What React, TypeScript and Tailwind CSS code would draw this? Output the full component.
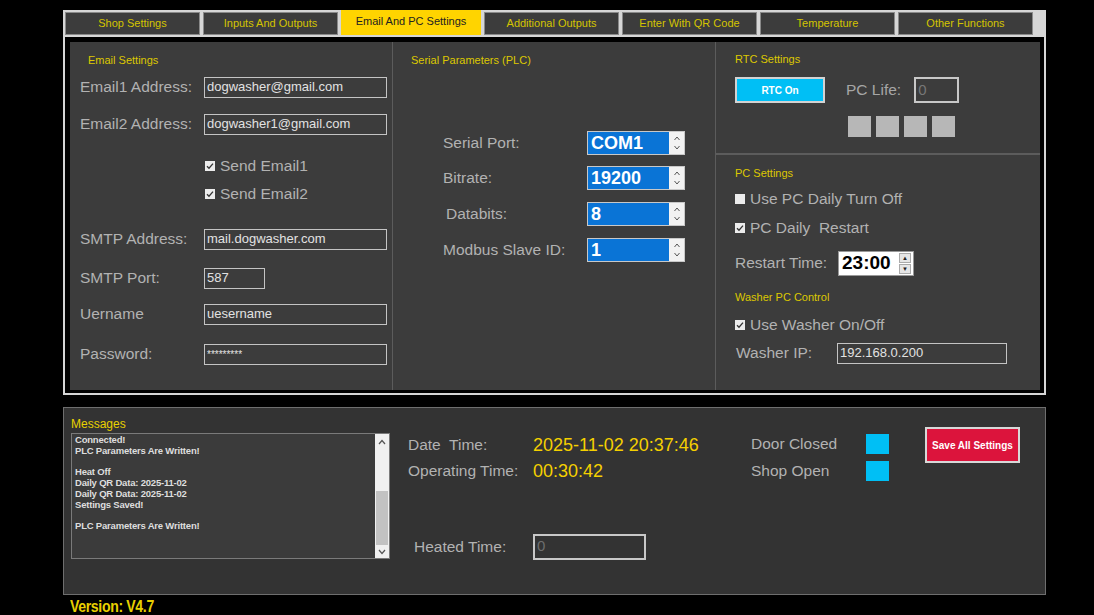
import React from 'react'

const tabs = [
  'Shop Settings',
  'Inputs And Outputs',
  'Email And PC Settings',
  'Additional Outputs',
  'Enter With QR Code',
  'Temperature',
  'Other Functions',
]

const messages = [
  'Connected!',
  'PLC Parameters Are Written!',
  '',
  'Heat Off',
  'Daily QR Data: 2025-11-02',
  'Daily QR Data: 2025-11-02',
  'Settings Saved!',
  '',
  'PLC Parameters Are Written!',
]

function Heading({ children }: { children: React.ReactNode }) {
  return <div className="h-[14px] text-[11px] leading-[14px] text-[#dcc800]">{children}</div>
}

function Check({ checked }: { checked: boolean }) {
  return (
    <div className="flex h-[10px] w-[10px] shrink-0 items-center justify-center bg-[#ececec]">
      {checked && (
        <svg width="8" height="8" viewBox="0 0 8 8">
          <path d="M1 4.2 L3 6.2 L7 1.6" fill="none" stroke="#333" strokeWidth="1.3" />
        </svg>
      )}
    </div>
  )
}

function Arrows() {
  return (
    <svg width="8" height="18" viewBox="0 0 8 18">
      <path d="M1.5 6 L4 3 L6.5 6" fill="none" stroke="#555" strokeWidth="1" />
      <path d="M1.5 12 L4 15 L6.5 12" fill="none" stroke="#555" strokeWidth="1" />
    </svg>
  )
}

function TextBox({ value, w, h = 21, small }: { value: string; w: number; h?: number; small?: boolean }) {
  return (
    <div
      className={`flex items-center border border-[#c4c4c4] pl-[2px] text-[#e2e2e2] ${small ? 'text-[10px]' : 'text-[13px]'}`}
      style={{ width: w, height: h }}
    >
      {value}
    </div>
  )
}

function Spin({ value }: { value: string }) {
  return (
    <div className="flex h-[24px] w-[98px] border border-[#c8c8c8] bg-[#f2f2f2]">
      <div className="flex w-[81px] items-center bg-[#0a74d6] pl-[3px] text-[18px] font-bold text-white">{value}</div>
      <div className="flex flex-1 items-center justify-center">
        <Arrows />
      </div>
    </div>
  )
}

function Row({ label, w, mt, children, h = 22, pl = 0 }: { label: string; w: number; mt: number; children?: React.ReactNode; h?: number; pl?: number }) {
  return (
    <div className="flex items-center" style={{ marginTop: mt, height: h }}>
      <div className="shrink-0 text-[15.5px] text-[#b2b2b2]" style={{ width: w, paddingLeft: pl }}>
        {label}
      </div>
      {children}
    </div>
  )
}

function CheckRow({ label, checked, mt, indent }: { label: string; checked: boolean; mt: number; indent: number }) {
  return (
    <div className="flex h-[20px] items-center" style={{ marginTop: mt, paddingLeft: indent }}>
      <Check checked={checked} />
      <span className="ml-[5px] whitespace-pre text-[15.5px] text-[#b2b2b2]">{label}</span>
    </div>
  )
}

export default function App() {
  return (
    <div className="h-[615px] w-[1094px] overflow-hidden bg-black font-['Liberation_Sans',Arial,sans-serif]">
      <div className="ml-[63px] w-[983px] pt-[10px]">
        {/* tab strip */}
        <div className="flex h-[25px] items-end gap-[3px] bg-[#d6d6d6] px-[2px]">
          {tabs.map((t) =>
            t === 'Email And PC Settings' ? (
              <div key={t} className="flex h-[25px] w-[140px] items-center justify-center bg-[#ffd400] pb-[2px] text-[11px] text-[#222]">
                {t}
              </div>
            ) : (
              <div key={t} className="flex h-[23px] w-[135px] items-center justify-center border border-[#8a8a8a] bg-[#3c3c3c] text-[11px] text-[#d4c400]">
                {t}
              </div>
            ),
          )}
        </div>

        {/* page */}
        <div className="bg-[#d6d6d6] p-[2px]">
          <div className="bg-black pb-[3px] pl-[5px] pr-[4px] pt-[5px]">
            <div className="flex h-[348px] bg-[#3c3c3c]">
              {/* email settings */}
              <div className="w-[323px] border-r border-[#5c5c5c] pl-[10px] pt-[11px]">
                <div className="pl-[8px]">
                  <Heading>Email Settings</Heading>
                </div>
                <Row label="Email1 Address:" w={124} mt={9}>
                  <TextBox value="dogwasher@gmail.com" w={183} />
                </Row>
                <Row label="Email2 Address:" w={124} mt={15}>
                  <TextBox value="dogwasher1@gmail.com" w={183} />
                </Row>
                <CheckRow label="Send Email1" checked mt={21} indent={125} />
                <CheckRow label="Send Email2" checked mt={8} indent={125} />
                <Row label="SMTP Address:" w={124} mt={24}>
                  <TextBox value="mail.dogwasher.com" w={183} />
                </Row>
                <Row label="SMTP Port:" w={124} mt={17}>
                  <TextBox value="587" w={61} />
                </Row>
                <Row label="Uername" w={124} mt={14}>
                  <TextBox value="uesername" w={183} />
                </Row>
                <Row label="Password:" w={124} mt={18}>
                  <TextBox value="*********" w={183} small />
                </Row>
              </div>

              {/* serial parameters */}
              <div className="w-[323px] border-r border-[#5c5c5c] pt-[11px]">
                <div className="pl-[18px]">
                  <Heading>Serial Parameters (PLC)</Heading>
                </div>
                <div className="pl-[50px]">
                  <Row label="Serial Port:" w={144} mt={64} h={24}>
                    <Spin value="COM1" />
                  </Row>
                  <Row label="Bitrate:" w={144} mt={11} h={24}>
                    <Spin value="19200" />
                  </Row>
                  <Row label="Databits:" w={144} mt={12} h={24} pl={3}>
                    <Spin value="8" />
                  </Row>
                  <Row label="Modbus Slave ID:" w={144} mt={12} h={24}>
                    <Spin value="1" />
                  </Row>
                </div>
              </div>

              {/* rtc + pc */}
              <div className="flex flex-1 flex-col">
                <div className="h-[113px] border-b-2 border-[#5c5c5c] pl-[19px] pt-[10px]">
                  <Heading>RTC Settings</Heading>
                  <div className="mt-[10px] flex h-[28px] items-center">
                    <div className="flex h-[26px] w-[90px] items-center justify-center border-2 border-[#d2d2d2] bg-[#00bff5] text-[10px] font-bold text-white">
                      RTC On
                    </div>
                    <span className="ml-[21px] text-[15.5px] text-[#a6a6a6]">PC Life:</span>
                    <div className="ml-[13px] flex h-[26px] w-[45px] items-center border-2 border-[#c8c8c8] pl-[2px] text-[15px] text-[#777]">
                      0
                    </div>
                  </div>
                  <div className="ml-[113px] mt-[12px] flex gap-[5px]">
                    {[0, 1, 2, 3].map((i) => (
                      <div key={i} className="h-[21px] w-[23px] bg-[#b7b7b7]" />
                    ))}
                  </div>
                </div>
                <div className="flex-1 pl-[19px] pt-[11px]">
                  <Heading>PC Settings</Heading>
                  <CheckRow label="Use PC Daily Turn Off" checked={false} mt={9} indent={0} />
                  <CheckRow label="PC Daily  Restart" checked mt={9} indent={0} />
                  <div className="mt-[12px] flex h-[26px] items-center">
                    <div className="w-[103px] text-[15.5px] text-[#b2b2b2]">Restart Time:</div>
                    <div className="flex h-[25px] w-[76px] items-center justify-between border border-[#999] bg-white pl-[3px] pr-[2px]">
                      <span className="text-[19px] font-bold text-black">23:00</span>
                      <div className="flex h-[21px] w-[12px] flex-col gap-[1px]">
                        <div className="flex flex-1 items-center justify-center border border-[#aaa] bg-[#e6e6e6] text-[6px] leading-none text-[#222]">▲</div>
                        <div className="flex flex-1 items-center justify-center border border-[#aaa] bg-[#e6e6e6] text-[6px] leading-none text-[#222]">▼</div>
                      </div>
                    </div>
                  </div>
                  <div className="mt-[14px]">
                    <Heading>Washer PC Control</Heading>
                  </div>
                  <CheckRow label="Use Washer On/Off" checked mt={11} indent={0} />
                  <Row label="Washer IP:" w={102} mt={7} pl={1}>
                    <TextBox value="192.168.0.200" w={170} />
                  </Row>
                </div>
              </div>
            </div>
          </div>
        </div>

        {/* status panel */}
        <div className="mt-[12px] flex h-[188px] border border-[#6e6e6e] bg-[#333333] pl-[7px]">
          <div className="pt-[9px]">
            <div className="h-[14px] text-[12px] leading-[14px] text-[#e8d000]">Messages</div>
            <div className="mt-[2px] flex h-[126px] w-[319px] border border-[#7a7a7a] bg-[#3b3b3b]">
              <div className="flex-1 pl-[3px] pt-[1px] text-[9.5px] font-bold leading-[10.8px] tracking-[-0.2px] text-[#dedede]">
                {messages.map((m, i) => (
                  <div key={i} className="h-[10.8px]">
                    {m}
                  </div>
                ))}
              </div>
              <div className="flex w-[14px] flex-col bg-[#f0f0f0]">
                <div className="flex h-[16px] items-center justify-center">
                  <svg width="8" height="6" viewBox="0 0 8 6">
                    <path d="M1 5 L4 1.5 L7 5" fill="none" stroke="#555" strokeWidth="1.2" />
                  </svg>
                </div>
                <div className="h-[41px]" />
                <div className="mx-[1px] h-[54px] bg-[#c2c2c2]" />
                <div className="flex flex-1 items-center justify-center">
                  <svg width="8" height="6" viewBox="0 0 8 6">
                    <path d="M1 1 L4 4.5 L7 1" fill="none" stroke="#555" strokeWidth="1.2" />
                  </svg>
                </div>
              </div>
            </div>
          </div>

          <div className="ml-[18px] w-[343px] pt-[26px]">
            <div className="flex h-[22px] items-center">
              <div className="w-[125px] text-[15.5px] text-[#b2b2b2]">Date&nbsp; Time:</div>
              <span className="text-[18px] text-[#f5d000]">2025-11-02 20:37:46</span>
            </div>
            <div className="mt-[4px] flex h-[22px] items-center">
              <div className="w-[125px] text-[15.5px] text-[#b2b2b2]">Operating Time:</div>
              <span className="text-[18px] text-[#f5d000]">00:30:42</span>
            </div>
            <div className="mt-[52px] flex h-[25px] items-center">
              <div className="w-[125px] pl-[6px] text-[15.5px] text-[#b2b2b2]">Heated Time:</div>
              <div className="flex h-[26px] w-[113px] items-center border-2 border-[#c8c8c8] pl-[2px] text-[15px] text-[#6e6e6e]">0</div>
            </div>
          </div>

          <div className="pt-[25px]">
            <div className="flex h-[21px] items-center">
              <div className="w-[115px] text-[15.5px] text-[#b2b2b2]">Door Closed</div>
              <div className="h-[20px] w-[23px] bg-[#00bff5]" />
            </div>
            <div className="mt-[6px] flex h-[21px] items-center">
              <div className="w-[115px] text-[15.5px] text-[#b2b2b2]">Shop Open</div>
              <div className="h-[20px] w-[23px] bg-[#00bff5]" />
            </div>
          </div>

          <div className="ml-[36px] pt-[19px]">
            <div className="flex h-[36px] w-[95px] items-center justify-center border-2 border-[#d8d8d8] bg-[#dc143c] text-[10px] font-bold text-white">
              Save All Settings
            </div>
          </div>
        </div>

        <div className="mt-[3px] pl-[7px] leading-[18px]">
          <span className="inline-block origin-left scale-x-[0.88] text-[16px] font-bold tracking-[-0.4px] text-[#e8d000]">Version: V4.7</span>
        </div>
      </div>
    </div>
  )
}
